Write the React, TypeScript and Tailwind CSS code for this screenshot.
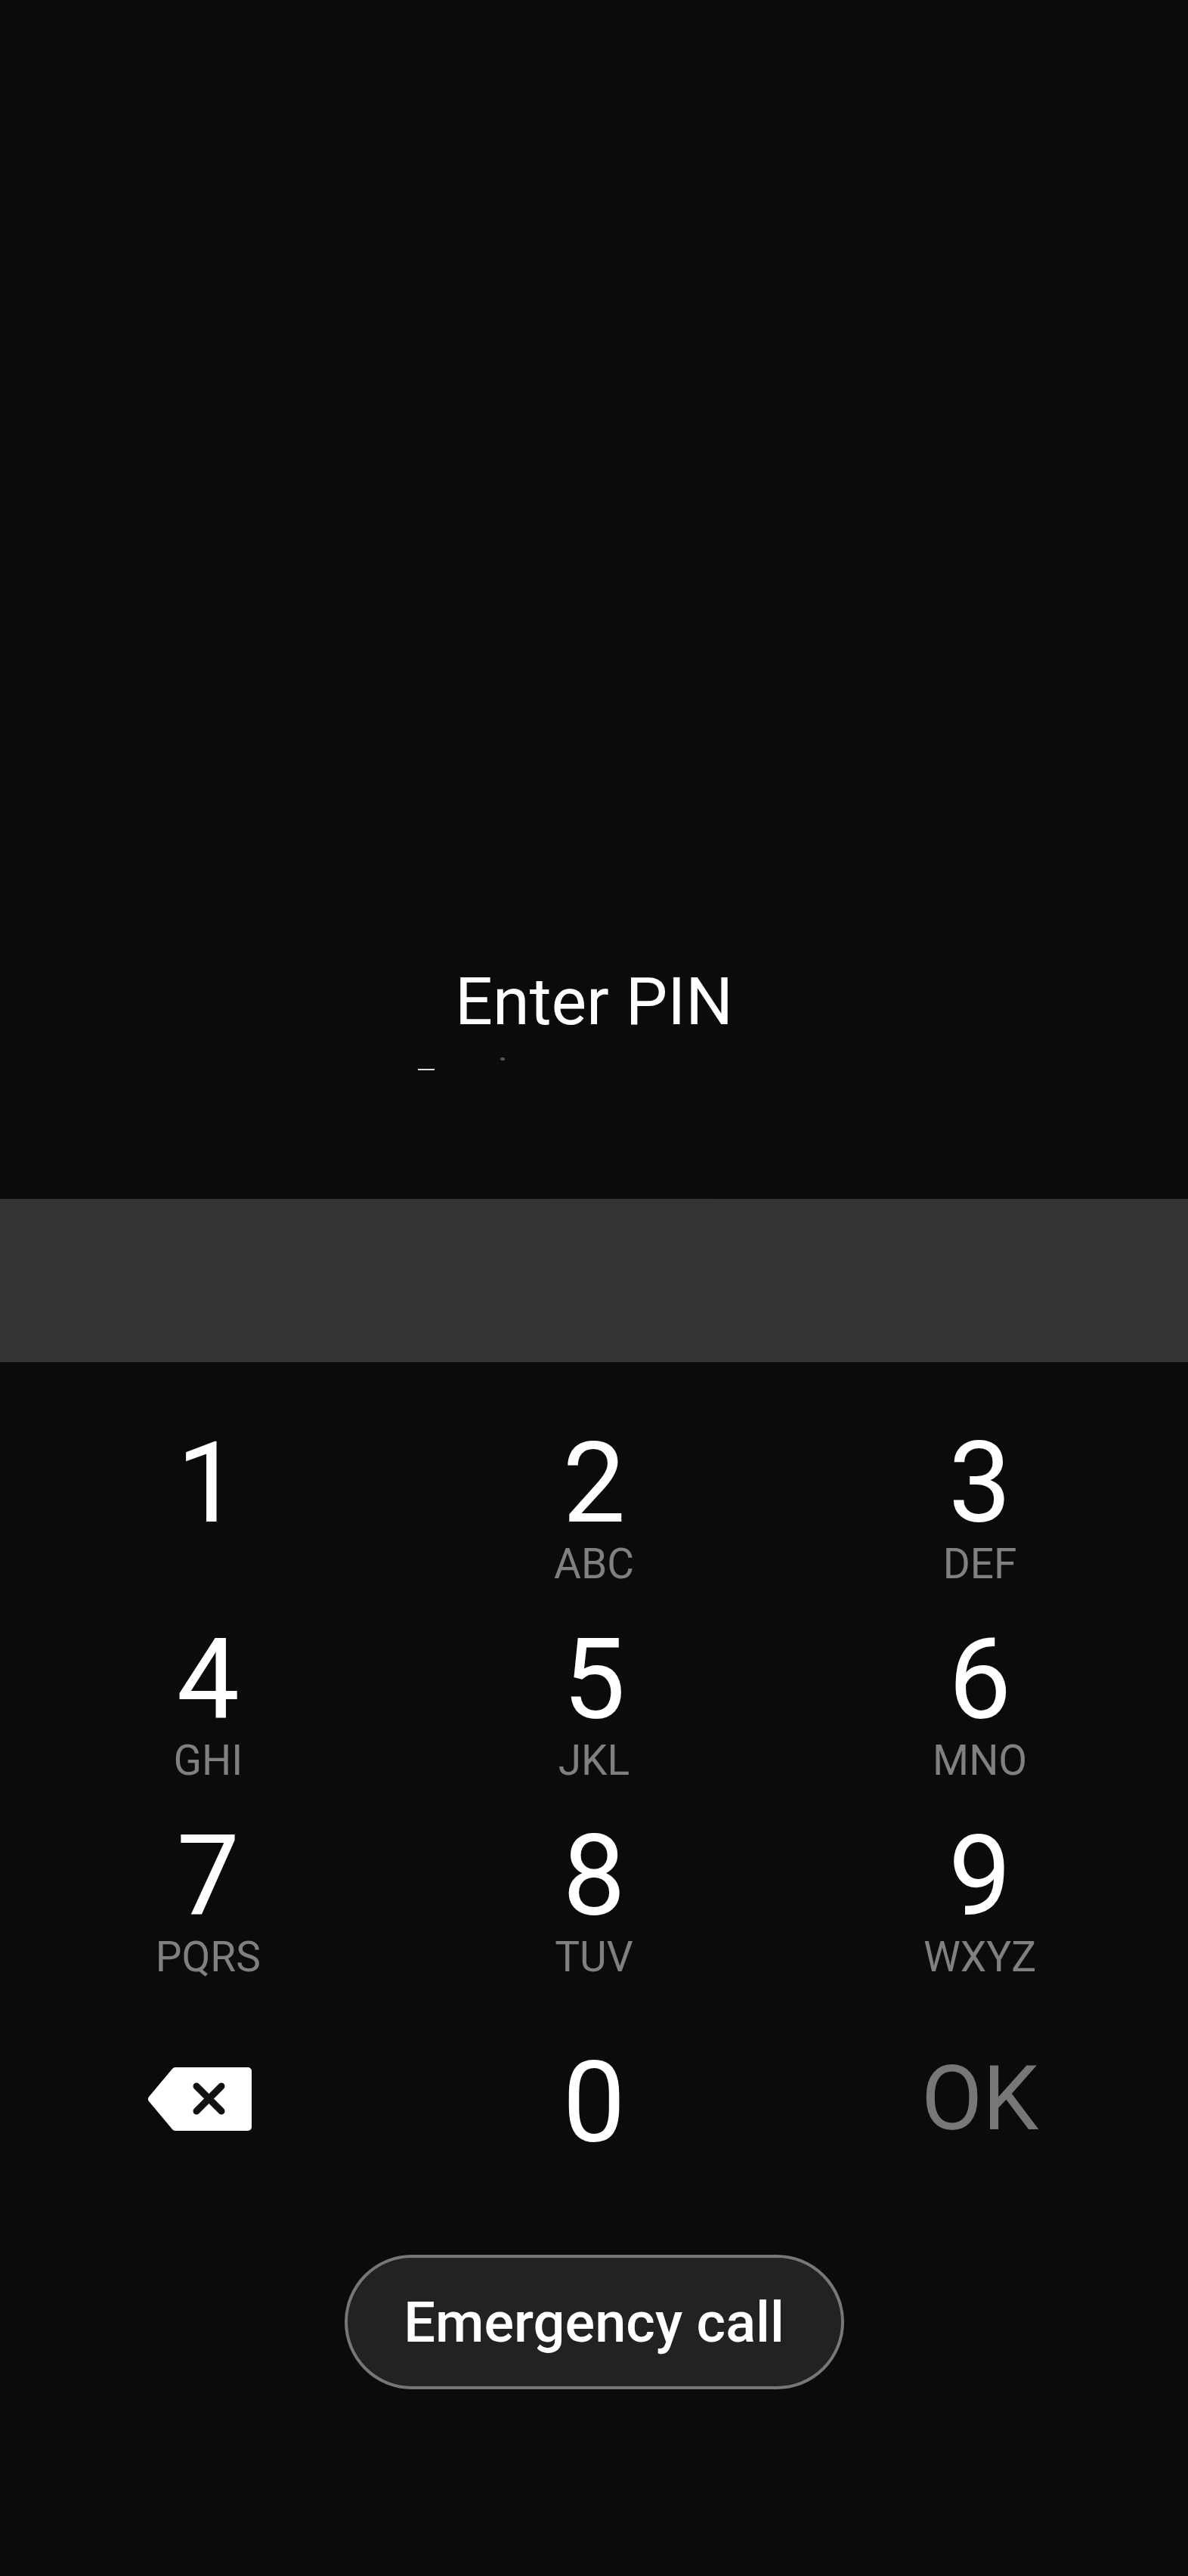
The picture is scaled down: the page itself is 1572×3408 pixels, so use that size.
import React from 'react';

const KEYS = [
  { digit: '1', letters: '' },
  { digit: '2', letters: 'ABC' },
  { digit: '3', letters: 'DEF' },
  { digit: '4', letters: 'GHI' },
  { digit: '5', letters: 'JKL' },
  { digit: '6', letters: 'MNO' },
  { digit: '7', letters: 'PQRS' },
  { digit: '8', letters: 'TUV' },
  { digit: '9', letters: 'WXYZ' },
];

const BackspaceIcon = () => (
  <svg width="138" height="84" viewBox="0 0 138 84">
    <path
      d="M37 0H133a5 5 0 0 1 5 5V79a5 5 0 0 1-5 5H37a5 5 0 0 1-4-2L2 45a5 5 0 0 1 0-6L33 2a5 5 0 0 1 4-2Z"
      fill="#ffffff"
    />
    <path d="M65 25L98 58M98 25L65 58" stroke="#111111" strokeWidth="9" strokeLinecap="round" fill="none" />
  </svg>
);

const Key: React.FC<{ digit: string; letters: string }> = ({ digit, letters }) => (
  <div className="flex h-[260px] flex-col items-center">
    <span className="text-[148px] leading-[148px] text-white">{digit}</span>
    <span className="mt-[5px] text-[55px] leading-[55px] text-[#808080]">{letters}</span>
  </div>
);

export default function App() {
  return (
    <div className="flex h-[3408px] w-[1572px] flex-col overflow-hidden bg-[#0b0b0b] font-['Roboto',sans-serif]">
      <div className="relative h-[1586px] shrink-0 pt-[1272px] text-center">
        <h1 className="text-[88px] font-normal leading-[106px] text-white">Enter PIN</h1>
        {/* stray specks under the title */}
        <span className="absolute left-[553px] top-[1414px] h-[2px] w-[22px] bg-[#dddddd]" />
        <span className="absolute left-[662px] top-[1399px] h-[4px] w-[6px] rounded-full bg-[#555555]" />
        <span className="absolute left-[729px] top-[1405px] h-[181px] w-[212px] bg-[#0c0c0c]" />
      </div>

      <div className="h-[216px] shrink-0 bg-[#333333]" />

      <div className="grid grid-cols-3 px-[20px] pt-[87px]">
        {KEYS.map(k => (
          <Key key={k.digit} digit={k.digit} letters={k.letters} />
        ))}
        <div className="mt-[34px] flex h-[148px] items-center justify-center pr-[22px]">
          <BackspaceIcon />
        </div>
        <div className="mt-[40px] flex h-[148px] items-center justify-center">
          <span className="text-[148px] leading-[148px] text-white">0</span>
        </div>
        <div className="mt-[34px] flex h-[148px] items-center justify-center">
          <span className="text-[118px] leading-[118px] text-[#777777]">OK</span>
        </div>
      </div>

      <div className="flex justify-center pt-[126px]">
        <button className="flex h-[178px] w-[661px] items-center justify-center rounded-full border-[4px] border-[#777777] bg-[#222222] text-[74px] font-medium text-white">
          Emergency call
        </button>
      </div>
    </div>
  );
}
